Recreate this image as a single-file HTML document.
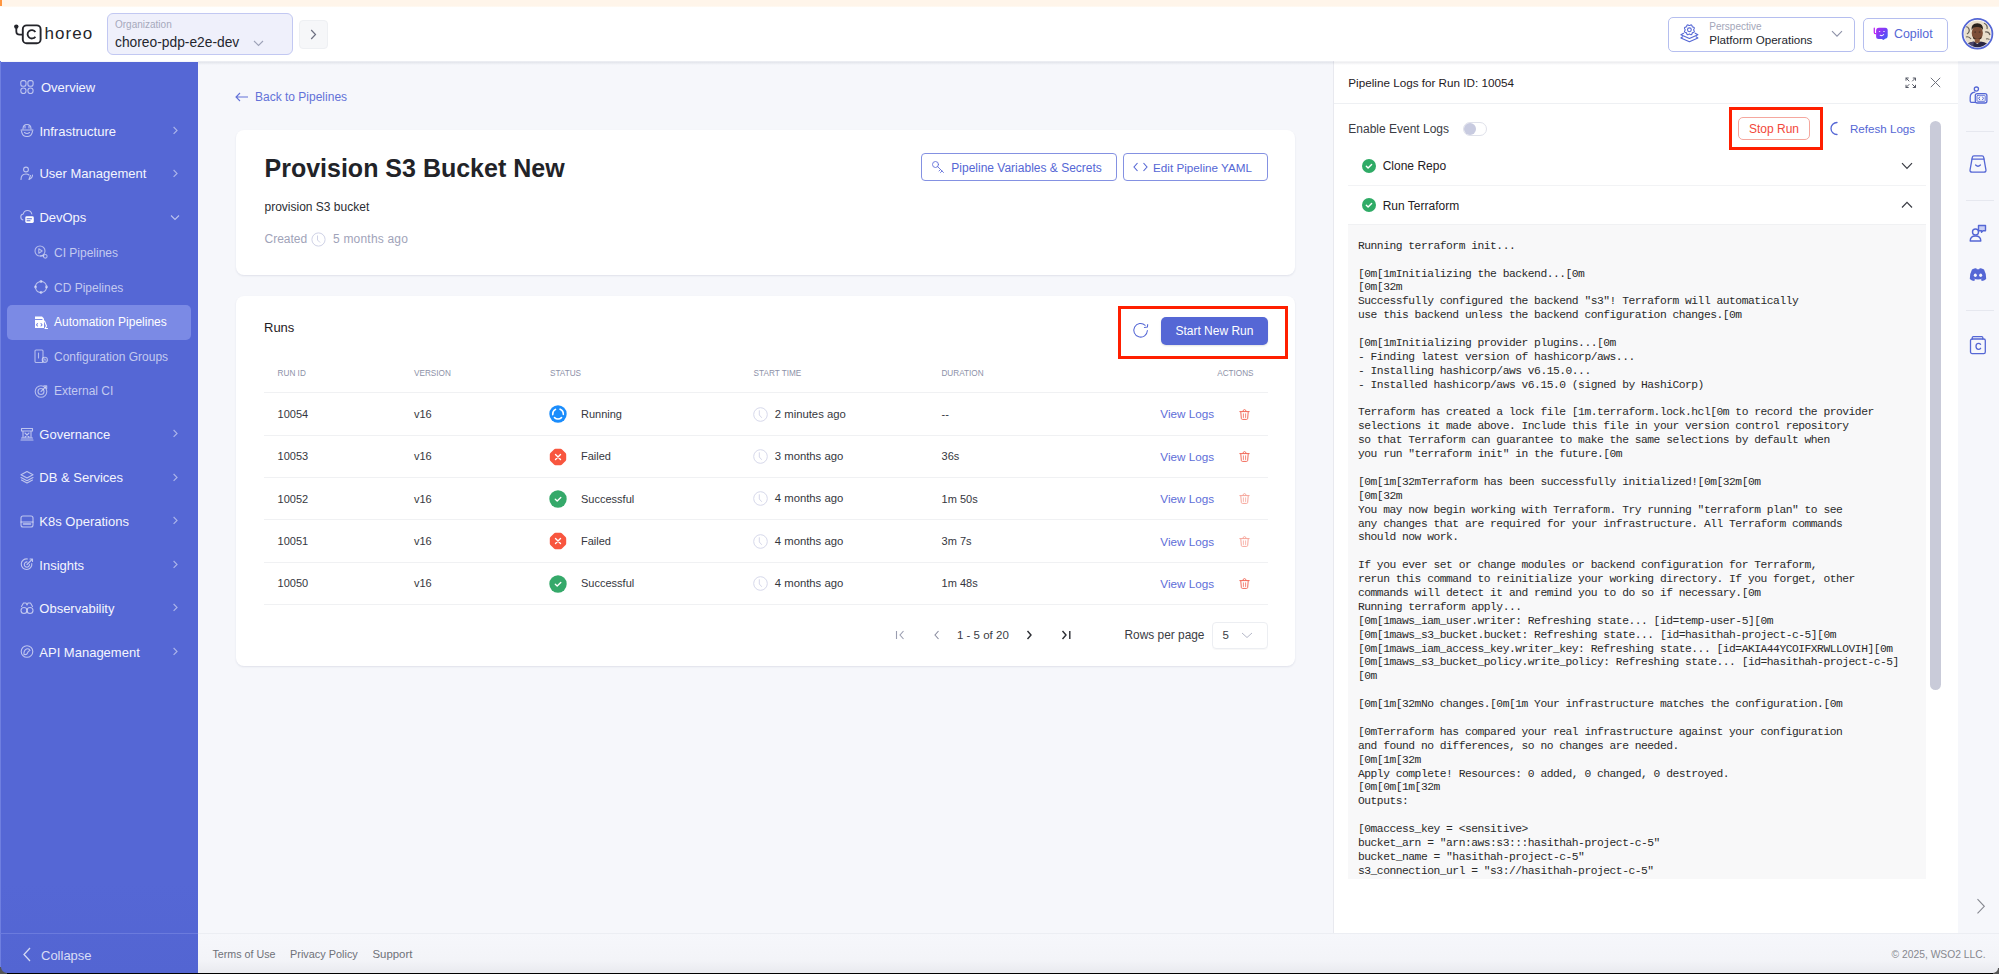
<!DOCTYPE html>
<html><head><meta charset="utf-8">
<style>
*{box-sizing:border-box;margin:0;padding:0}
html,body{width:1999px;height:974px;overflow:hidden;background:#f6f7fb;font-family:"Liberation Sans",sans-serif;color:#1f2024}
.abs{position:absolute}
.tx{position:absolute;line-height:1;white-space:nowrap}
.card{position:absolute;background:#fff;border-radius:8px;box-shadow:0 1px 2px rgba(30,40,90,0.10)}
</style></head>
<body>
<div class="abs" style="left:0;top:0;width:1999px;height:7px;background:linear-gradient(#fff5ea 84%,#fffbf6)"></div>
<div class="abs" style="left:0;top:7px;width:1999px;height:54px;background:#fff"></div>
<svg class="abs" style="left:10px;top:18px" width="40" height="32" viewBox="0 0 40 32">
<circle cx="6.3" cy="8.6" r="2.2" fill="#24252b"/>
<path d="M6.3 9 V13.2 Q6.3 16.6 9.7 16.6 H12.8" fill="none" stroke="#24252b" stroke-width="1.8"/>
<rect x="12.8" y="7.4" width="17.8" height="17.8" rx="3.8" fill="none" stroke="#24252b" stroke-width="1.9"/>
<path d="M25.4 13.9 A4.3 4.2 0 1 0 25.4 18.7" fill="none" stroke="#24252b" stroke-width="1.8"/>
</svg>
<div class="tx" style="left:44.5px;top:25.45px;font-size:17px;color:#24252b;font-weight:normal;letter-spacing:1.05px">horeo</div>

<div class="abs" style="left:107px;top:13px;width:186px;height:42px;background:#eff0fb;border:1px solid #c2c8f2;border-radius:6px"></div>
<div class="tx" style="left:115px;top:19.70px;font-size:10px;color:#a6a9bb;font-weight:normal;">Organization</div>

<div class="tx" style="left:115px;top:35.87px;font-size:13.8px;color:#24262e;font-weight:normal;">choreo-pdp-e2e-dev</div>

<svg class="abs" style="left:253px;top:40px" width="11" height="7" viewBox="0 0 11 7"><path d="M1 1 L5.5 5.5 L10 1" fill="none" stroke="#9ea2b8" stroke-width="1.1"/></svg>
<div class="abs" style="left:299px;top:19.5px;width:29px;height:29px;background:#f6f7f9;border:1px solid #eef0f3;border-radius:4px"></div>
<svg class="abs" style="left:310px;top:29px" width="7" height="11" viewBox="0 0 7 11"><path d="M1.2 1 L5.5 5.5 L1.2 10" fill="none" stroke="#6d7082" stroke-width="1.2"/></svg>
<div class="abs" style="left:1668px;top:16.5px;width:187px;height:35px;background:#fff;border:1px solid #b5beef;border-radius:5px"></div>
<svg class="abs" style="left:1679px;top:22px" width="21" height="22" viewBox="0 0 21 22">
<g fill="none" stroke="#5567d5" stroke-width="1.1" stroke-linejoin="round" stroke-linecap="round">
<path d="M14.65 7.80 L14.75 8.18 L14.99 8.61 L15.23 9.09 L15.31 9.59 L15.13 10.01 L14.73 10.30 L14.22 10.47 L13.75 10.61 L13.41 10.81 L13.21 11.15 L13.07 11.62 L12.90 12.13 L12.61 12.53 L12.19 12.71 L11.69 12.63 L11.21 12.39 L10.78 12.15 L10.40 12.05 L10.02 12.15 L9.59 12.39 L9.11 12.63 L8.61 12.71 L8.19 12.53 L7.90 12.13 L7.73 11.62 L7.59 11.15 L7.39 10.81 L7.05 10.61 L6.58 10.47 L6.07 10.30 L5.67 10.01 L5.49 9.59 L5.57 9.09 L5.81 8.61 L6.05 8.18 L6.15 7.80 L6.05 7.42 L5.81 6.99 L5.57 6.51 L5.49 6.01 L5.67 5.59 L6.07 5.30 L6.58 5.13 L7.05 4.99 L7.39 4.79 L7.59 4.45 L7.73 3.98 L7.90 3.47 L8.19 3.07 L8.61 2.89 L9.11 2.97 L9.59 3.21 L10.02 3.45 L10.40 3.55 L10.78 3.45 L11.21 3.21 L11.69 2.97 L12.19 2.89 L12.61 3.07 L12.90 3.47 L13.07 3.98 L13.21 4.45 L13.41 4.79 L13.75 4.99 L14.22 5.13 L14.73 5.30 L15.13 5.59 L15.31 6.01 L15.23 6.51 L14.99 6.99 L14.75 7.42Z"/>
<circle cx="10.4" cy="7.8" r="1.9"/>
<path d="M4.6 11.3 L1.9 12.7 L10.4 16.4 L18.9 12.7 L16.2 11.3"/>
<path d="M3.7 14.8 L1.9 16 L10.4 19.7 L18.9 16 L17.1 14.8"/>
</g></svg>
<div class="tx" style="left:1709.3px;top:21.80px;font-size:10px;color:#a3a6b9;font-weight:normal;">Perspective</div>

<div class="tx" style="left:1709.3px;top:34.04px;font-size:11.6px;color:#24262e;font-weight:normal;">Platform Operations</div>

<svg class="abs" style="left:1831px;top:30px" width="12" height="8" viewBox="0 0 12 8"><path d="M1 1.2 L6 6.2 L11 1.2" fill="none" stroke="#8e92a8" stroke-width="1.1"/></svg>
<div class="abs" style="left:1862.5px;top:17.5px;width:85px;height:34px;background:#fff;border:1px solid #b5beef;border-radius:5px"></div>
<svg class="abs" style="left:1872px;top:26px" width="17" height="16" viewBox="0 0 17 16">
<defs><linearGradient id="cg" x1="0" y1="0" x2="1" y2="1"><stop offset="0" stop-color="#b52af4"/><stop offset="0.45" stop-color="#7b3ef6"/><stop offset="1" stop-color="#3563f6"/></linearGradient></defs>
<path d="M7 1.7 H13.2 Q15.7 1.7 15.7 4.2 V10 Q15.7 12.5 13.2 12.7 L11.4 14 L9.8 12.9 H6.6 Q4.1 12.9 4.1 10.4 V4.6 Q4.1 1.7 7 1.7Z" fill="url(#cg)"/>
<path d="M2.3 2.2 V6.4 Q2.3 7.7 3.6 7.7 H4.5" fill="none" stroke="#c02cf4" stroke-width="1.3" stroke-linecap="round"/>
<ellipse cx="7.6" cy="5.5" rx="0.8" ry="0.6" fill="#fff" opacity="0.85"/><ellipse cx="12" cy="5.5" rx="0.9" ry="0.6" fill="#fff" opacity="0.85"/>
<path d="M8.2 9.3 Q10.3 10.2 11.6 8.5" fill="none" stroke="#fff" stroke-width="1.1" stroke-linecap="round" opacity="0.9"/>
</svg>
<div class="tx" style="left:1894px;top:28.06px;font-size:12.4px;color:#5567d5;font-weight:normal;">Copilot</div>

<svg class="abs" style="left:1961px;top:17px" width="33" height="34" viewBox="0 0 33 34">
<defs><clipPath id="av"><circle cx="16.5" cy="16.8" r="13.4"/></clipPath>
<filter id="bl" x="-10%" y="-10%" width="120%" height="120%"><feGaussianBlur stdDeviation="0.6"/></filter></defs>
<circle cx="16.5" cy="16.8" r="14.9" fill="#fff" stroke="#5567d5" stroke-width="1.8"/>
<g clip-path="url(#av)"><g filter="url(#bl)">
<rect x="0" y="0" width="33" height="34" fill="#e9dfcc"/>
<path d="M3 11 Q6 8 8 12 Q9 15 6 17 M5 20 Q8 19 10 22 M23 6 Q27 8 26 12 M24 15 Q28 14 29 18 M25 22 Q28 21 30 24" fill="none" stroke="#3b3530" stroke-width="1.2" opacity="0.75"/>
<ellipse cx="16.3" cy="16" rx="5.6" ry="7.2" fill="#7d5038"/>
<path d="M10.5 13 Q10 6.5 16.3 6.3 Q22.5 6.5 22 13 Q20 9.5 16.3 10 Q12.5 9.5 10.5 13Z" fill="#2b211c"/>
<ellipse cx="14.2" cy="15" rx="1" ry="0.6" fill="#3a2a22"/><ellipse cx="18.6" cy="15" rx="1" ry="0.6" fill="#3a2a22"/>
<path d="M12 19.5 Q16.3 24.5 20.6 19.5 L20.4 21.5 Q16.3 25 12.2 21.5Z" fill="#3d2a20"/>
<rect x="13.8" y="22" width="5" height="4" fill="#8a5a40"/>
<path d="M2 34 Q4 25 13 24.5 L16.3 27 L19.6 24.5 Q28 25 31 34Z" fill="#2b2842"/>
<path d="M7 27 Q10 25 13 24.6 L12 30Z" fill="#5a5380" opacity="0.7"/>
</g></g></svg>
<div class="abs" style="left:0;top:61.5px;width:198px;height:913px;background:linear-gradient(#5567d5 90%,#5365d2)"></div>
<div class="abs" style="left:0;top:61px;width:1px;height:913px;background:#6f7fe0"></div>
<svg class="abs" style="left:20px;top:79.7px" width="14" height="14" viewBox="0 0 14 14"><g fill="none" stroke="rgba(255,255,255,0.62)" stroke-width="1.1" stroke-linecap="round" stroke-linejoin="round"><rect x="0.8" y="0.6" width="5.2" height="5.6" rx="2"/><rect x="7.9" y="0.6" width="5.2" height="5.6" rx="2"/><rect x="0.8" y="8" width="5.2" height="5.6" rx="2.6"/><rect x="7.9" y="8" width="5.2" height="5.6" rx="2.6"/></g></svg>
<div class="tx" style="left:41px;top:81.15px;font-size:13px;color:#f4f5fd;font-weight:normal;">Overview</div>

<svg class="abs" style="left:20px;top:123.19999999999999px" width="14" height="14" viewBox="0 0 14 14"><g fill="none" stroke="rgba(255,255,255,0.62)" stroke-width="1.1" stroke-linecap="round" stroke-linejoin="round"><path d="M3 6 Q3 1.5 7 1.5 Q11 1.5 11 6"/><path d="M1 7 H13"/><path d="M1.5 8 Q2 13.5 7 13.5 Q12 13.5 12.5 8"/><path d="M4.5 9.5 Q7 11.5 9.5 9.5"/><path d="M5 3 V5 M9 3 V5"/></g></svg>
<div class="tx" style="left:39.4px;top:124.65px;font-size:13px;color:#f4f5fd;font-weight:normal;">Infrastructure</div>

<svg class="abs" style="left:171.5px;top:126.1px" width="7" height="9" viewBox="0 0 7 9"><path d="M1.6 1 L5 4.4 L1.6 7.8" fill="none" stroke="rgba(255,255,255,0.5)" stroke-width="1.2"/></svg>
<svg class="abs" style="left:20px;top:165.9px" width="14" height="14" viewBox="0 0 14 14"><g fill="none" stroke="rgba(255,255,255,0.62)" stroke-width="1.1" stroke-linecap="round" stroke-linejoin="round"><circle cx="6" cy="3.5" r="2.4"/><path d="M1 13.5 Q1 8 6 8 Q8 8 9 9"/><path d="M9 13.5 Q12.5 12 12.5 9 M10.5 9.5 Q9.5 12 9 13.5"/></g></svg>
<div class="tx" style="left:39.4px;top:167.35px;font-size:13px;color:#f4f5fd;font-weight:normal;">User Management</div>

<svg class="abs" style="left:171.5px;top:168.8px" width="7" height="9" viewBox="0 0 7 9"><path d="M1.6 1 L5 4.4 L1.6 7.8" fill="none" stroke="rgba(255,255,255,0.5)" stroke-width="1.2"/></svg>
<svg class="abs" style="left:20px;top:209.4px" width="14" height="14" viewBox="0 0 14 14"><g fill="none" stroke="rgba(255,255,255,0.62)" stroke-width="1.1" stroke-linecap="round" stroke-linejoin="round"><path d="M3 11 Q0.8 10.5 0.8 7.8 Q0.8 5.3 3.3 5 Q4 1.5 7.5 1.5 Q11 1.5 11.8 5"/><rect x="5.3" y="7.3" width="8.5" height="6.6" rx="1.4" fill="#fff" stroke="none"/><path d="M7 9.8 H11.5 M7 11.8 H10" stroke="#5567d5"/></g></svg>
<div class="tx" style="left:39.4px;top:210.85px;font-size:13px;color:#f4f5fd;font-weight:normal;">DevOps</div>

<svg class="abs" style="left:170px;top:213.9px" width="10" height="7" viewBox="0 0 10 7"><path d="M1 1.5 L5 5.5 L9 1.5" fill="none" stroke="rgba(255,255,255,0.6)" stroke-width="1.1"/></svg>
<svg class="abs" style="left:20px;top:426.5px" width="14" height="14" viewBox="0 0 14 14"><g fill="none" stroke="rgba(255,255,255,0.62)" stroke-width="1.1" stroke-linecap="round" stroke-linejoin="round"><path d="M1.5 1.5 H12.5 V4 H1.5Z M3 4 V11 M11 4 V11 M1 13 H13 M1.5 11 H12.5 M5 6 L9 10 M9 6 L5 10"/></g></svg>
<div class="tx" style="left:39.3px;top:427.95px;font-size:13px;color:#f4f5fd;font-weight:normal;">Governance</div>

<svg class="abs" style="left:171.5px;top:429.4px" width="7" height="9" viewBox="0 0 7 9"><path d="M1.6 1 L5 4.4 L1.6 7.8" fill="none" stroke="rgba(255,255,255,0.5)" stroke-width="1.2"/></svg>
<svg class="abs" style="left:20px;top:470.0px" width="14" height="14" viewBox="0 0 14 14"><g fill="none" stroke="rgba(255,255,255,0.62)" stroke-width="1.1" stroke-linecap="round" stroke-linejoin="round"><path d="M7 1.5 L13 4.8 L7 8 L1 4.8Z"/><path d="M1 7.5 L7 10.8 L13 7.5"/><path d="M1.5 10 L7 13 L12.5 10"/></g></svg>
<div class="tx" style="left:39.3px;top:471.45px;font-size:13px;color:#f4f5fd;font-weight:normal;">DB &amp; Services</div>

<svg class="abs" style="left:171.5px;top:472.9px" width="7" height="9" viewBox="0 0 7 9"><path d="M1.6 1 L5 4.4 L1.6 7.8" fill="none" stroke="rgba(255,255,255,0.5)" stroke-width="1.2"/></svg>
<svg class="abs" style="left:20px;top:513.5px" width="14" height="14" viewBox="0 0 14 14"><g fill="none" stroke="rgba(255,255,255,0.62)" stroke-width="1.1" stroke-linecap="round" stroke-linejoin="round"><rect x="1" y="2" width="12" height="11" rx="2"/><path d="M1 8 H13"/><path d="M3.5 10 H10.5" stroke-width="1.6"/></g></svg>
<div class="tx" style="left:39.3px;top:514.95px;font-size:13px;color:#f4f5fd;font-weight:normal;">K8s Operations</div>

<svg class="abs" style="left:171.5px;top:516.4px" width="7" height="9" viewBox="0 0 7 9"><path d="M1.6 1 L5 4.4 L1.6 7.8" fill="none" stroke="rgba(255,255,255,0.5)" stroke-width="1.2"/></svg>
<svg class="abs" style="left:20px;top:557.1px" width="14" height="14" viewBox="0 0 14 14"><g fill="none" stroke="rgba(255,255,255,0.62)" stroke-width="1.1" stroke-linecap="round" stroke-linejoin="round"><path d="M11.8 6.5 A5.3 5.3 0 1 1 7.5 2"/><path d="M9.5 7.5 A2.6 2.6 0 1 1 7 4.9"/><path d="M7 7.5 L12 2.5 M10 2 H12.5 V4.5"/></g></svg>
<div class="tx" style="left:39.3px;top:558.55px;font-size:13px;color:#f4f5fd;font-weight:normal;">Insights</div>

<svg class="abs" style="left:171.5px;top:560.0px" width="7" height="9" viewBox="0 0 7 9"><path d="M1.6 1 L5 4.4 L1.6 7.8" fill="none" stroke="rgba(255,255,255,0.5)" stroke-width="1.2"/></svg>
<svg class="abs" style="left:20px;top:600.5px" width="14" height="14" viewBox="0 0 14 14"><g fill="none" stroke="rgba(255,255,255,0.62)" stroke-width="1.1" stroke-linecap="round" stroke-linejoin="round"><path d="M1.5 5.5 L3.5 2 H6 L7 4 L8 2 H10.5 L12.5 5.5"/><circle cx="4" cy="9.5" r="3"/><circle cx="10" cy="9.5" r="3"/></g></svg>
<div class="tx" style="left:39.3px;top:601.95px;font-size:13px;color:#f4f5fd;font-weight:normal;">Observability</div>

<svg class="abs" style="left:171.5px;top:603.4px" width="7" height="9" viewBox="0 0 7 9"><path d="M1.6 1 L5 4.4 L1.6 7.8" fill="none" stroke="rgba(255,255,255,0.5)" stroke-width="1.2"/></svg>
<svg class="abs" style="left:20px;top:644.2px" width="14" height="14" viewBox="0 0 14 14"><g fill="none" stroke="rgba(255,255,255,0.62)" stroke-width="1.1" stroke-linecap="round" stroke-linejoin="round"><circle cx="7" cy="7.5" r="5.8"/><path d="M4 10.5 Q3.5 6.5 6.5 5 Q9 4 10 6.5 Q8 7 7.5 9 Q7 11 4 10.5Z"/></g></svg>
<div class="tx" style="left:39.3px;top:645.65px;font-size:13px;color:#f4f5fd;font-weight:normal;">API Management</div>

<svg class="abs" style="left:171.5px;top:647.1px" width="7" height="9" viewBox="0 0 7 9"><path d="M1.6 1 L5 4.4 L1.6 7.8" fill="none" stroke="rgba(255,255,255,0.5)" stroke-width="1.2"/></svg>
<div class="abs" style="left:7px;top:305px;width:184px;height:35px;background:#7b8ae5;border-radius:5px"></div>
<svg class="abs" style="left:34px;top:245.3px" width="14" height="14" viewBox="0 0 14 14"><g fill="none" stroke="rgba(255,255,255,0.56)" stroke-width="1.1" stroke-linecap="round" stroke-linejoin="round"><circle cx="6" cy="6" r="5"/><path d="M4.8 3.8 L8.2 6 L4.8 8.2Z"/><circle cx="11.3" cy="11.3" r="1.8"/><path d="M6.5 11 H9.5"/></g></svg>
<div class="tx" style="left:54px;top:247.10px;font-size:12px;color:rgba(255,255,255,0.66);font-weight:normal;">CI Pipelines</div>

<svg class="abs" style="left:34px;top:280.2px" width="14" height="14" viewBox="0 0 14 14"><g fill="none" stroke="rgba(255,255,255,0.56)" stroke-width="1.1" stroke-linecap="round" stroke-linejoin="round"><path d="M7 1.5 A5.5 5.5 0 0 1 12.5 7 M12.5 7 A5.5 5.5 0 0 1 7 12.5 M7 12.5 A5.5 5.5 0 0 1 1.5 7 M1.5 7 A5.5 5.5 0 0 1 7 1.5" stroke-dasharray="7 1.6"/><circle cx="7" cy="1.5" r="0.9"/><circle cx="12.5" cy="7" r="0.9"/><circle cx="7" cy="12.5" r="0.9"/><circle cx="1.5" cy="7" r="0.9"/></g></svg>
<div class="tx" style="left:54px;top:282.00px;font-size:12px;color:rgba(255,255,255,0.66);font-weight:normal;">CD Pipelines</div>

<svg class="abs" style="left:34px;top:314.6px" width="14" height="14" viewBox="0 0 14 14"><g fill="none" stroke="#fff" stroke-width="1.1" stroke-linecap="round" stroke-linejoin="round"><path d="M1 1.5 H8 L10 3.5 V13 H1Z" fill="#fff" stroke="none"/><path d="M3.5 8.5 L2.5 9.8 L3.5 11 M7 8.5 L8 9.8 L7 11" stroke="#7b8ae5"/><path d="M10.5 6 L12.5 11 L11 13.5 H13.5" stroke="#fff"/><path d="M1.5 4.5 H8" stroke="#7b8ae5"/></g></svg>
<div class="tx" style="left:54px;top:316.40px;font-size:12px;color:#ffffff;font-weight:normal;">Automation Pipelines</div>

<svg class="abs" style="left:34px;top:349px" width="14" height="14" viewBox="0 0 14 14"><g fill="none" stroke="rgba(255,255,255,0.56)" stroke-width="1.1" stroke-linecap="round" stroke-linejoin="round"><rect x="1" y="1" width="8" height="12.5" rx="1"/><path d="M4.5 4 V9"/><circle cx="10.8" cy="10.8" r="2.6"/><path d="M10.8 9.8 V11 H11.8"/></g></svg>
<div class="tx" style="left:54px;top:350.80px;font-size:12px;color:rgba(255,255,255,0.66);font-weight:normal;">Configuration Groups</div>

<svg class="abs" style="left:34px;top:383.6px" width="14" height="14" viewBox="0 0 14 14"><g fill="none" stroke="rgba(255,255,255,0.56)" stroke-width="1.1" stroke-linecap="round" stroke-linejoin="round"><circle cx="7" cy="7.5" r="5.8"/><circle cx="7" cy="7.5" r="3"/><path d="M7 7.5 L12 2.5 M10 1.8 H12.7 V4.5"/></g></svg>
<div class="tx" style="left:54px;top:385.40px;font-size:12px;color:rgba(255,255,255,0.66);font-weight:normal;">External CI</div>

<div class="abs" style="left:0;top:933px;width:198px;height:1px;background:#6b7bdd"></div>
<svg class="abs" style="left:22px;top:947px" width="10" height="15" viewBox="0 0 10 15"><path d="M8 1 L2 7.5 L8 14" fill="none" stroke="rgba(255,255,255,0.75)" stroke-width="1.3"/></svg>
<div class="tx" style="left:41px;top:948.95px;font-size:13px;color:#d9ddf6;font-weight:normal;">Collapse</div>

<svg class="abs" style="left:235px;top:91.5px" width="14" height="10" viewBox="0 0 14 10"><path d="M5 1 L1 5 L5 9 M1 5 H13" fill="none" stroke="#6372d8" stroke-width="1.1"/></svg>
<div class="tx" style="left:255px;top:91.10px;font-size:12px;color:#6372d8;font-weight:normal;">Back to Pipelines</div>

<div class="card" style="left:236px;top:130px;width:1059px;height:145px"></div>
<div class="tx" style="left:264.5px;top:155.75px;font-size:25px;color:#222328;font-weight:bold;">Provision S3 Bucket New</div>

<div class="tx" style="left:264.5px;top:201.20px;font-size:12px;color:#2b2d33;font-weight:normal;">provision S3 bucket</div>

<div class="tx" style="left:264.5px;top:232.80px;font-size:12px;color:#9fa3b9;font-weight:normal;">Created</div>

<svg class="abs" style="left:311px;top:232px" width="15" height="15" viewBox="0 0 15 15"><circle cx="7.5" cy="7.5" r="6.6" fill="none" stroke="#cfd2e6" stroke-width="1"/><path d="M6.5 3.5 V8 L9 10.5" fill="none" stroke="#cfd2e6" stroke-width="1"/></svg>
<div class="tx" style="left:333px;top:232.80px;font-size:12px;color:#9fa3b9;font-weight:normal;letter-spacing:0.2px">5 months ago</div>

<div class="abs" style="left:921px;top:153px;width:196px;height:28px;border:1px solid #8491e2;border-radius:4px"></div>
<svg class="abs" style="left:931px;top:160px" width="15" height="15" viewBox="0 0 15 15"><g fill="none" stroke="#6371d9" stroke-width="0.9" stroke-linecap="round"><circle cx="4.5" cy="4.5" r="3"/><path d="M6.5 6.5 L12.5 12.5 M9.5 9.5 L8 11 M11 11 L9.5 12.5"/></g></svg>
<div class="tx" style="left:951.3px;top:161.60px;font-size:12px;color:#5567d5;font-weight:normal;">Pipeline Variables &amp; Secrets</div>

<div class="abs" style="left:1123px;top:153px;width:145px;height:28px;border:1px solid #8491e2;border-radius:4px"></div>
<svg class="abs" style="left:1133px;top:162px" width="15" height="10" viewBox="0 0 15 10"><path d="M4.5 1 L1 5 L4.5 9 M10.5 1 L14 5 L10.5 9" fill="none" stroke="#5567d5" stroke-width="1.1"/></svg>
<div class="tx" style="left:1153px;top:161.86px;font-size:11.7px;color:#5567d5;font-weight:normal;">Edit Pipeline YAML</div>

<div class="card" style="left:236px;top:296px;width:1059px;height:370px"></div>
<div class="tx" style="left:264px;top:321.35px;font-size:13px;color:#1f2024;font-weight:normal;">Runs</div>

<svg class="abs" style="left:1132px;top:322px" width="17" height="17" viewBox="0 0 17 17"><g fill="none" stroke="#5567d5" stroke-width="1.05" stroke-linecap="round" stroke-linejoin="round"><path d="M15.4 8.6 A6.8 6.8 0 1 1 13.2 3.3"/><path d="M15.7 2.6 L15.4 5.1 L12.4 5.4"/></g></svg>
<div class="abs" style="left:1161px;top:317px;width:106.5px;height:27.5px;background:#5567d5;border-radius:5px;box-shadow:0 1px 2px rgba(0,0,0,0.12)"></div>
<div class="tx" style="left:1175.4px;top:325.00px;font-size:12px;color:#ffffff;font-weight:normal;">Start New Run</div>

<div class="abs" style="left:1118px;top:306px;width:169.5px;height:53px;border:3px solid #ff1f00"></div>
<div class="tx" style="left:277.6px;top:369.63px;font-size:8.2px;color:#8d91a8;font-weight:normal;">RUN ID</div>

<div class="tx" style="left:414px;top:369.63px;font-size:8.2px;color:#8d91a8;font-weight:normal;">VERSION</div>

<div class="tx" style="left:550px;top:369.63px;font-size:8.2px;color:#8d91a8;font-weight:normal;">STATUS</div>

<div class="tx" style="left:753.6px;top:369.63px;font-size:8.2px;color:#8d91a8;font-weight:normal;">START TIME</div>

<div class="tx" style="left:941.4px;top:369.63px;font-size:8.2px;color:#8d91a8;font-weight:normal;">DURATION</div>

<div class="tx" style="left:1153.6px;top:369.63px;width:100px;text-align:right;font-size:8.2px;color:#8d91a8">ACTIONS</div>
<div class="abs" style="left:264px;top:392.0px;width:1004px;height:1px;background:#f0f1f3"></div>
<div class="abs" style="left:264px;top:435.1px;width:1004px;height:1px;background:#f0f1f3"></div>
<div class="abs" style="left:264px;top:477.1px;width:1004px;height:1px;background:#f0f1f3"></div>
<div class="abs" style="left:264px;top:519.3px;width:1004px;height:1px;background:#f0f1f3"></div>
<div class="abs" style="left:264px;top:561.7px;width:1004px;height:1px;background:#f0f1f3"></div>
<div class="abs" style="left:264px;top:603.9px;width:1004px;height:1px;background:#f0f1f3"></div>
<div class="tx" style="left:277.6px;top:409.05px;font-size:11px;color:#35373e;font-weight:normal;">10054</div>

<div class="tx" style="left:414px;top:409.05px;font-size:11px;color:#35373e;font-weight:normal;">v16</div>

<svg class="abs" style="left:549px;top:405.2px" width="18" height="18" viewBox="0 0 18 18"><circle cx="9" cy="9" r="8.7" fill="#1b8dfc"/><g fill="none" stroke="#fff" stroke-width="1.6" stroke-linecap="round"><path d="M3.75 9.6 A5.3 5.3 0 0 1 6.5 4.4"/><path d="M11.1 4.2 A5.3 5.3 0 0 1 14.3 9.4"/><path d="M12.5 12.6 A5.3 5.3 0 0 1 5.5 12.6"/></g></svg>
<div class="tx" style="left:581px;top:409.05px;font-size:11px;color:#35373e;font-weight:normal;">Running</div>

<svg class="abs" style="left:753px;top:406.7px" width="15" height="15" viewBox="0 0 15 15"><circle cx="7.5" cy="7.5" r="6.8" fill="none" stroke="#d6d8ea" stroke-width="1"/><path d="M6.3 3.3 V8 L8.8 10.8" fill="none" stroke="#d6d8ea" stroke-width="1"/></svg>
<div class="tx" style="left:774.8px;top:408.79px;font-size:11.3px;color:#35373e;font-weight:normal;">2 minutes ago</div>

<div class="tx" style="left:941.6px;top:409.05px;font-size:11px;color:#35373e;font-weight:normal;">--</div>

<div class="tx" style="left:1160.3px;top:408.45px;font-size:11.7px;color:#5e6ed8;font-weight:normal;">View Logs</div>

<svg class="abs" style="left:1239px;top:408.5px" width="11" height="11" viewBox="0 0 11 11"><g fill="none" stroke="#f26a5a" stroke-width="1" stroke-linecap="round" stroke-linejoin="round"><path d="M0.8 2.6 H10.2"/><path d="M3.9 2.6 Q3.9 0.6 5.5 0.6 Q7.1 0.6 7.1 2.6"/><path d="M1.8 3 L2.3 9.4 Q2.4 10.4 3.4 10.4 H7.6 Q8.6 10.4 8.7 9.4 L9.2 3"/><path d="M4.4 4.8 V8.5 M6.6 4.8 V8.5" stroke-width="0.8"/></g></svg>
<div class="tx" style="left:277.6px;top:451.45px;font-size:11px;color:#35373e;font-weight:normal;">10053</div>

<div class="tx" style="left:414px;top:451.45px;font-size:11px;color:#35373e;font-weight:normal;">v16</div>

<svg class="abs" style="left:549px;top:447.6px" width="18" height="18" viewBox="0 0 18 18"><path d="M15.10 11.53 L11.53 15.10 L6.47 15.10 L2.90 11.53 L2.90 6.47 L6.47 2.90 L11.53 2.90 L15.10 6.47Z" fill="#f8563f" stroke="#f8563f" stroke-width="4.2" stroke-linejoin="round"/><path d="M6.5 6.5 L11.5 11.5 M11.5 6.5 L6.5 11.5" stroke="#fff" stroke-width="1.4" stroke-linecap="round"/></svg>
<div class="tx" style="left:581px;top:451.45px;font-size:11px;color:#35373e;font-weight:normal;">Failed</div>

<svg class="abs" style="left:753px;top:449.1px" width="15" height="15" viewBox="0 0 15 15"><circle cx="7.5" cy="7.5" r="6.8" fill="none" stroke="#d6d8ea" stroke-width="1"/><path d="M6.3 3.3 V8 L8.8 10.8" fill="none" stroke="#d6d8ea" stroke-width="1"/></svg>
<div class="tx" style="left:774.8px;top:451.19px;font-size:11.3px;color:#35373e;font-weight:normal;">3 months ago</div>

<div class="tx" style="left:941.6px;top:451.45px;font-size:11px;color:#35373e;font-weight:normal;">36s</div>

<div class="tx" style="left:1160.3px;top:450.86px;font-size:11.7px;color:#5e6ed8;font-weight:normal;">View Logs</div>

<svg class="abs" style="left:1239px;top:450.90000000000003px" width="11" height="11" viewBox="0 0 11 11"><g fill="none" stroke="#f26a5a" stroke-width="1" stroke-linecap="round" stroke-linejoin="round"><path d="M0.8 2.6 H10.2"/><path d="M3.9 2.6 Q3.9 0.6 5.5 0.6 Q7.1 0.6 7.1 2.6"/><path d="M1.8 3 L2.3 9.4 Q2.4 10.4 3.4 10.4 H7.6 Q8.6 10.4 8.7 9.4 L9.2 3"/><path d="M4.4 4.8 V8.5 M6.6 4.8 V8.5" stroke-width="0.8"/></g></svg>
<div class="tx" style="left:277.6px;top:493.75px;font-size:11px;color:#35373e;font-weight:normal;">10052</div>

<div class="tx" style="left:414px;top:493.75px;font-size:11px;color:#35373e;font-weight:normal;">v16</div>

<svg class="abs" style="left:549px;top:489.9px" width="18" height="18" viewBox="0 0 18 18"><circle cx="9" cy="9" r="8.7" fill="#35a96a"/><path d="M6.3 9.3 L8.2 11 L11.8 7.4" fill="none" stroke="#fff" stroke-width="1.35" stroke-linecap="round" stroke-linejoin="round"/></svg>
<div class="tx" style="left:581px;top:493.75px;font-size:11px;color:#35373e;font-weight:normal;">Successful</div>

<svg class="abs" style="left:753px;top:491.4px" width="15" height="15" viewBox="0 0 15 15"><circle cx="7.5" cy="7.5" r="6.8" fill="none" stroke="#d6d8ea" stroke-width="1"/><path d="M6.3 3.3 V8 L8.8 10.8" fill="none" stroke="#d6d8ea" stroke-width="1"/></svg>
<div class="tx" style="left:774.8px;top:493.49px;font-size:11.3px;color:#35373e;font-weight:normal;">4 months ago</div>

<div class="tx" style="left:941.6px;top:493.75px;font-size:11px;color:#35373e;font-weight:normal;">1m 50s</div>

<div class="tx" style="left:1160.3px;top:493.15px;font-size:11.7px;color:#5e6ed8;font-weight:normal;">View Logs</div>

<svg class="abs" style="left:1239px;top:493.2px" width="11" height="11" viewBox="0 0 11 11"><g fill="none" stroke="#f6a69b" stroke-width="1" stroke-linecap="round" stroke-linejoin="round"><path d="M0.8 2.6 H10.2"/><path d="M3.9 2.6 Q3.9 0.6 5.5 0.6 Q7.1 0.6 7.1 2.6"/><path d="M1.8 3 L2.3 9.4 Q2.4 10.4 3.4 10.4 H7.6 Q8.6 10.4 8.7 9.4 L9.2 3"/><path d="M4.4 4.8 V8.5 M6.6 4.8 V8.5" stroke-width="0.8"/></g></svg>
<div class="tx" style="left:277.6px;top:536.15px;font-size:11px;color:#35373e;font-weight:normal;">10051</div>

<div class="tx" style="left:414px;top:536.15px;font-size:11px;color:#35373e;font-weight:normal;">v16</div>

<svg class="abs" style="left:549px;top:532.3px" width="18" height="18" viewBox="0 0 18 18"><path d="M15.10 11.53 L11.53 15.10 L6.47 15.10 L2.90 11.53 L2.90 6.47 L6.47 2.90 L11.53 2.90 L15.10 6.47Z" fill="#f8563f" stroke="#f8563f" stroke-width="4.2" stroke-linejoin="round"/><path d="M6.5 6.5 L11.5 11.5 M11.5 6.5 L6.5 11.5" stroke="#fff" stroke-width="1.4" stroke-linecap="round"/></svg>
<div class="tx" style="left:581px;top:536.15px;font-size:11px;color:#35373e;font-weight:normal;">Failed</div>

<svg class="abs" style="left:753px;top:533.8px" width="15" height="15" viewBox="0 0 15 15"><circle cx="7.5" cy="7.5" r="6.8" fill="none" stroke="#d6d8ea" stroke-width="1"/><path d="M6.3 3.3 V8 L8.8 10.8" fill="none" stroke="#d6d8ea" stroke-width="1"/></svg>
<div class="tx" style="left:774.8px;top:535.89px;font-size:11.3px;color:#35373e;font-weight:normal;">4 months ago</div>

<div class="tx" style="left:941.6px;top:536.15px;font-size:11px;color:#35373e;font-weight:normal;">3m 7s</div>

<div class="tx" style="left:1160.3px;top:535.55px;font-size:11.7px;color:#5e6ed8;font-weight:normal;">View Logs</div>

<svg class="abs" style="left:1239px;top:535.5999999999999px" width="11" height="11" viewBox="0 0 11 11"><g fill="none" stroke="#f6a69b" stroke-width="1" stroke-linecap="round" stroke-linejoin="round"><path d="M0.8 2.6 H10.2"/><path d="M3.9 2.6 Q3.9 0.6 5.5 0.6 Q7.1 0.6 7.1 2.6"/><path d="M1.8 3 L2.3 9.4 Q2.4 10.4 3.4 10.4 H7.6 Q8.6 10.4 8.7 9.4 L9.2 3"/><path d="M4.4 4.8 V8.5 M6.6 4.8 V8.5" stroke-width="0.8"/></g></svg>
<div class="tx" style="left:277.6px;top:578.45px;font-size:11px;color:#35373e;font-weight:normal;">10050</div>

<div class="tx" style="left:414px;top:578.45px;font-size:11px;color:#35373e;font-weight:normal;">v16</div>

<svg class="abs" style="left:549px;top:574.6px" width="18" height="18" viewBox="0 0 18 18"><circle cx="9" cy="9" r="8.7" fill="#35a96a"/><path d="M6.3 9.3 L8.2 11 L11.8 7.4" fill="none" stroke="#fff" stroke-width="1.35" stroke-linecap="round" stroke-linejoin="round"/></svg>
<div class="tx" style="left:581px;top:578.45px;font-size:11px;color:#35373e;font-weight:normal;">Successful</div>

<svg class="abs" style="left:753px;top:576.1px" width="15" height="15" viewBox="0 0 15 15"><circle cx="7.5" cy="7.5" r="6.8" fill="none" stroke="#d6d8ea" stroke-width="1"/><path d="M6.3 3.3 V8 L8.8 10.8" fill="none" stroke="#d6d8ea" stroke-width="1"/></svg>
<div class="tx" style="left:774.8px;top:578.20px;font-size:11.3px;color:#35373e;font-weight:normal;">4 months ago</div>

<div class="tx" style="left:941.6px;top:578.45px;font-size:11px;color:#35373e;font-weight:normal;">1m 48s</div>

<div class="tx" style="left:1160.3px;top:577.86px;font-size:11.7px;color:#5e6ed8;font-weight:normal;">View Logs</div>

<svg class="abs" style="left:1239px;top:577.9px" width="11" height="11" viewBox="0 0 11 11"><g fill="none" stroke="#f26a5a" stroke-width="1" stroke-linecap="round" stroke-linejoin="round"><path d="M0.8 2.6 H10.2"/><path d="M3.9 2.6 Q3.9 0.6 5.5 0.6 Q7.1 0.6 7.1 2.6"/><path d="M1.8 3 L2.3 9.4 Q2.4 10.4 3.4 10.4 H7.6 Q8.6 10.4 8.7 9.4 L9.2 3"/><path d="M4.4 4.8 V8.5 M6.6 4.8 V8.5" stroke-width="0.8"/></g></svg>
<svg class="abs" style="left:895px;top:630px" width="10" height="10" viewBox="0 0 10 10"><path d="M1.5 1 V9 M8.5 1 L5 5 L8.5 9" fill="none" stroke="#9a9db0" stroke-width="1.1"/></svg>
<svg class="abs" style="left:933px;top:630px" width="7" height="10" viewBox="0 0 7 10"><path d="M5.5 1 L2 5 L5.5 9" fill="none" stroke="#8a8da0" stroke-width="1.1"/></svg>
<div class="tx" style="left:957px;top:630.02px;font-size:11.5px;color:#3a3c44;font-weight:normal;">1 - 5 of 20</div>

<svg class="abs" style="left:1026px;top:630px" width="7" height="10" viewBox="0 0 7 10"><path d="M1.5 1 L5 5 L1.5 9" fill="none" stroke="#2b2d33" stroke-width="1.4"/></svg>
<svg class="abs" style="left:1061px;top:630px" width="11" height="10" viewBox="0 0 11 10"><path d="M1.5 1 L5 5 L1.5 9 M8.8 1 V9" fill="none" stroke="#2b2d33" stroke-width="1.4"/></svg>
<div class="tx" style="left:1124.5px;top:629.68px;font-size:11.9px;color:#3a3c44;font-weight:normal;">Rows per page</div>

<div class="abs" style="left:1211.5px;top:621.5px;width:56px;height:27.5px;border:1px solid #eceef2;border-radius:4px;box-shadow:0 1px 1px rgba(0,0,0,0.03)"></div>
<div class="tx" style="left:1222.5px;top:630.02px;font-size:11.5px;color:#3a3c44;font-weight:normal;">5</div>

<svg class="abs" style="left:1241px;top:632px" width="12" height="7" viewBox="0 0 12 7"><path d="M1 1 L6 5.5 L11 1" fill="none" stroke="#b5b8c8" stroke-width="1"/></svg>
<div class="abs" style="left:1333px;top:61px;width:625px;height:872px;background:#fff;border-left:1px solid #e8e9ef"></div>
<div class="tx" style="left:1348.3px;top:77.46px;font-size:11.7px;color:#1f2024;font-weight:normal;">Pipeline Logs for Run ID: 10054</div>

<svg class="abs" style="left:1904.5px;top:76.5px" width="11.5" height="11.5" viewBox="0 0 11.5 11.5"><g fill="none" stroke="#575a66" stroke-width="1" stroke-linecap="round" stroke-linejoin="round"><path d="M4 4 L1 1 M1 3.3 V1 H3.3"/><path d="M7.5 4 L10.5 1 M8.2 1 H10.5 V3.3"/><path d="M4 7.5 L1 10.5 M1 8.2 V10.5 H3.3"/><path d="M7.5 7.5 L10.5 10.5 M10.5 8.2 V10.5 H8.2"/></g></svg>
<svg class="abs" style="left:1930px;top:76.5px" width="11" height="11" viewBox="0 0 11 11"><path d="M0.8 0.8 L10.2 10.2 M10.2 0.8 L0.8 10.2" fill="none" stroke="#70737e" stroke-width="1"/></svg>
<div class="abs" style="left:1334px;top:102.5px;width:624px;height:1px;background:#eef0f3"></div>
<div class="tx" style="left:1348.3px;top:122.80px;font-size:12px;color:#3a3c44;font-weight:normal;">Enable Event Logs</div>

<div class="abs" style="left:1462.5px;top:121.5px;width:24px;height:14px;border:1px solid #dfe1ea;border-radius:7px;background:#fff"></div>
<div class="abs" style="left:1463.5px;top:122.5px;width:12px;height:12px;border-radius:6px;background:#c8cbe0"></div>
<div class="abs" style="left:1737.5px;top:117px;width:72px;height:22.5px;border:1px solid #f5a79e;border-radius:5px"></div>
<div class="tx" style="left:1749px;top:122.80px;font-size:12px;color:#f2483b;font-weight:normal;">Stop Run</div>

<div class="abs" style="left:1729px;top:107px;width:94px;height:43px;border:3px solid #ff1f00"></div>
<svg class="abs" style="left:1828px;top:121px" width="12" height="15" viewBox="0 0 12 15"><path d="M9 1.5 A6 6 0 0 0 9 13.5" fill="none" stroke="#5567d5" stroke-width="1.3" stroke-linecap="round"/></svg>
<div class="tx" style="left:1850px;top:123.14px;font-size:11.6px;color:#5567d5;font-weight:normal;">Refesh Logs</div>

<div class="abs" style="left:1930px;top:121px;width:11px;height:569px;border-radius:5.5px;background:#c9cbd9"></div>
<svg class="abs" style="left:1361.5px;top:159px" width="14" height="14" viewBox="0 0 14 14"><circle cx="7" cy="7" r="7" fill="#2fab66"/><path d="M4.3 7.2 L6.1 9 L9.6 5.4" fill="none" stroke="#fff" stroke-width="1.4" stroke-linecap="round" stroke-linejoin="round"/></svg>
<div class="tx" style="left:1382.7px;top:160.10px;font-size:12px;color:#1f2024;font-weight:normal;">Clone Repo</div>

<svg class="abs" style="left:1900.5px;top:161.5px" width="12" height="8" viewBox="0 0 12 8"><path d="M1 1.2 L6 6.3 L11 1.2" fill="none" stroke="#3a3c44" stroke-width="1.2"/></svg>
<div class="abs" style="left:1348px;top:185px;width:578px;height:1px;background:#f2f3f5"></div>
<svg class="abs" style="left:1361.5px;top:198.4px" width="14" height="14" viewBox="0 0 14 14"><circle cx="7" cy="7" r="7" fill="#2fab66"/><path d="M4.3 7.2 L6.1 9 L9.6 5.4" fill="none" stroke="#fff" stroke-width="1.4" stroke-linecap="round" stroke-linejoin="round"/></svg>
<div class="tx" style="left:1382.7px;top:199.50px;font-size:12px;color:#1f2024;font-weight:normal;">Run Terraform</div>

<svg class="abs" style="left:1900.5px;top:200.5px" width="12" height="8" viewBox="0 0 12 8"><path d="M1 6.5 L6 1.4 L11 6.5" fill="none" stroke="#3a3c44" stroke-width="1.2"/></svg>
<div class="abs" style="left:1348px;top:223.5px;width:578px;height:655.5px;background:#f8f8f9;overflow:hidden;border-top:1px solid #f0f1f3">
<pre style="position:absolute;left:10px;top:15.24px;font-family:'Liberation Mono',monospace;font-size:11.3px;line-height:13.89px;letter-spacing:-0.49px;color:#2a2a2a">Running terraform init...

[0m[1mInitializing the backend...[0m
[0m[32m
Successfully configured the backend "s3"! Terraform will automatically
use this backend unless the backend configuration changes.[0m

[0m[1mInitializing provider plugins...[0m
- Finding latest version of hashicorp/aws...
- Installing hashicorp/aws v6.15.0...
- Installed hashicorp/aws v6.15.0 (signed by HashiCorp)

Terraform has created a lock file [1m.terraform.lock.hcl[0m to record the provider
selections it made above. Include this file in your version control repository
so that Terraform can guarantee to make the same selections by default when
you run "terraform init" in the future.[0m

[0m[1m[32mTerraform has been successfully initialized![0m[32m[0m
[0m[32m
You may now begin working with Terraform. Try running "terraform plan" to see
any changes that are required for your infrastructure. All Terraform commands
should now work.

If you ever set or change modules or backend configuration for Terraform,
rerun this command to reinitialize your working directory. If you forget, other
commands will detect it and remind you to do so if necessary.[0m
Running terraform apply...
[0m[1maws_iam_user.writer: Refreshing state... [id=temp-user-5][0m
[0m[1maws_s3_bucket.bucket: Refreshing state... [id=hasithah-project-c-5][0m
[0m[1maws_iam_access_key.writer_key: Refreshing state... [id=AKIA44YCOIFXRWLLOVIH][0m
[0m[1maws_s3_bucket_policy.write_policy: Refreshing state... [id=hasithah-project-c-5]
[0m

[0m[1m[32mNo changes.[0m[1m Your infrastructure matches the configuration.[0m

[0mTerraform has compared your real infrastructure against your configuration
and found no differences, so no changes are needed.
[0m[1m[32m
Apply complete! Resources: 0 added, 0 changed, 0 destroyed.
[0m[0m[1m[32m
Outputs:

[0maccess_key = &lt;sensitive&gt;
bucket_arn = "arn:aws:s3:::hasithah-project-c-5"
bucket_name = "hasithah-project-c-5"
s3_connection_url = "s3://hasithah-project-c-5"
</pre></div>
<div class="abs" style="left:1958px;top:61px;width:41px;height:872px;background:#f6f7fb"></div>
<svg class="abs" style="left:1968px;top:85px" width="20" height="20" viewBox="0 0 20 20"><g fill="none" stroke="#5567d5" stroke-width="1.3" stroke-linecap="round" stroke-linejoin="round"><circle cx="8.4" cy="4.1" r="2.1"/><path d="M6.8 7.2 Q2.2 7.8 2.2 12.5 V16 Q2.2 17.3 3.4 17.3 H7.3"/><rect x="7.3" y="8.6" width="11.6" height="9.4" rx="2"/><rect x="9" y="10.3" width="8.2" height="6" rx="0.8" stroke-width="0.9"/><path d="M11.7 11.9 L10.7 13.3 L11.7 14.7 M14.5 11.9 L15.5 13.3 L14.5 14.7" stroke-width="1"/></g></svg>
<div class="abs" style="left:1966px;top:131px;width:28px;height:1px;background:#e6e8ef"></div>
<svg class="abs" style="left:1968px;top:154px" width="20" height="20" viewBox="0 0 20 20"><g fill="none" stroke="#5567d5" stroke-width="1.3" stroke-linecap="round" stroke-linejoin="round"><path d="M5.9 1.9 H14.1 Q15.5 1.9 15.7 3.3 L17.9 15.6 Q18.4 18.1 15.9 18.1 H4.1 Q1.6 18.1 2.1 15.6 L4.3 3.3 Q4.5 1.9 5.9 1.9Z"/><path d="M3.9 5.1 H16.1"/><path d="M7.6 11 Q10 13.4 12.4 11"/></g></svg>
<div class="abs" style="left:1966px;top:200px;width:28px;height:1px;background:#e6e8ef"></div>
<svg class="abs" style="left:1969px;top:224px" width="18" height="18" viewBox="0 0 18 18"><g fill="none" stroke="#5567d5" stroke-width="1.4" stroke-linecap="round" stroke-linejoin="round"><circle cx="6.5" cy="8" r="3"/><path d="M1.2 17 Q1.2 12 6.5 12 Q11.8 12 11.8 17Z"/><path d="M9.5 1.5 H16.5 V6.8 H14 L12.5 8.3 V6.8 H9.5Z" fill="#c9cff4"/></g></svg>
<svg class="abs" style="left:1969px;top:267px" width="18" height="15" viewBox="0 0 18 15"><path d="M3 2.5 Q6 1 7.3 1.3 L7.8 2.3 Q9 2.1 10.2 2.3 L10.7 1.3 Q12 1 15 2.5 Q17.5 7 17.2 12 Q15 13.8 12.8 14 L11.9 12.5 Q13 12.1 13.7 11.5 Q9 13.5 4.3 11.5 Q5 12.1 6.1 12.5 L5.2 14 Q3 13.8 0.8 12 Q0.5 7 3 2.5Z" fill="#5567d5"/><ellipse cx="6.3" cy="8.2" rx="1.5" ry="1.7" fill="#f6f7fb"/><ellipse cx="11.7" cy="8.2" rx="1.5" ry="1.7" fill="#f6f7fb"/></svg>
<div class="abs" style="left:1966px;top:310px;width:28px;height:1px;background:#e6e8ef"></div>
<svg class="abs" style="left:1968px;top:335px" width="20" height="20" viewBox="0 0 20 20"><g fill="none" stroke="#5567d5" stroke-width="1.3" stroke-linecap="round" stroke-linejoin="round"><rect x="2.5" y="4" width="14.8" height="14.6" rx="1.6"/><path d="M4.3 4 V2.6 Q4.3 1.6 5.3 1.6 H13.8 Q14.8 1.6 14.8 2.6 V4"/><path d="M12.6 9.3 Q11.9 8.3 10.5 8.3 Q8 8.3 8 11.3 Q8 14.3 10.5 14.3 Q11.9 14.3 12.6 13.3"/></g></svg>
<svg class="abs" style="left:1976px;top:898px" width="10" height="17" viewBox="0 0 10 17"><path d="M1.5 1.2 L8.3 8.3 L1.5 15.4" fill="none" stroke="#85878f" stroke-width="1.1"/></svg>
<div class="abs" style="left:198px;top:61px;width:1801px;height:4px;background:linear-gradient(rgba(20,30,60,0.03),rgba(20,30,60,0.075) 35%,rgba(20,30,60,0))"></div>
<div class="abs" style="left:0;top:0;width:2px;height:6px;background:#ff9640"></div>
<div class="abs" style="left:198px;top:933px;width:1801px;height:41px;background:linear-gradient(#f6f7fb,#f3f4f8 65%,#e8e9ee);border-top:1px solid #eceef3"></div>
<div class="tx" style="left:212.5px;top:948.90px;font-size:10.7px;color:#6f7178;font-weight:normal;">Terms of Use</div>

<div class="tx" style="left:290px;top:948.74px;font-size:10.9px;color:#6f7178;font-weight:normal;">Privacy Policy</div>

<div class="tx" style="left:372.5px;top:949.01px;font-size:11.4px;color:#6f7178;font-weight:normal;">Support</div>

<div class="tx" style="left:1785.6px;top:950.04px;width:200px;text-align:right;font-size:10.3px;color:#86888f">© 2025, WSO2 LLC.</div>
<div class="abs" style="left:0;top:973px;width:1999px;height:1px;background:#000"></div>
<svg class="abs" style="left:0;top:967px" width="7" height="7" viewBox="0 0 7 7"><path d="M0 0 V7 H7 V6 A6 6 0 0 1 1 0Z" fill="#555"/></svg>
<svg class="abs" style="left:1993px;top:968px" width="6" height="6" viewBox="0 0 6 6"><path d="M6 0 V6 H0 V5 A5 5 0 0 0 5 0Z" fill="#555"/></svg>
</body></html>
